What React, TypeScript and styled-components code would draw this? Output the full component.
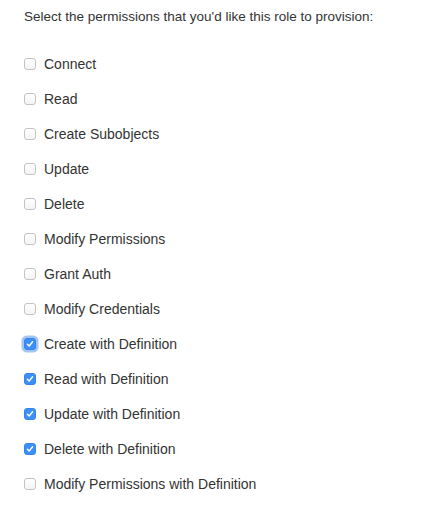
import styled, { createGlobalStyle, css } from "styled-components";

const GlobalStyle = createGlobalStyle`
  body {
    margin: 0;
    background: #ffffff;
    font-family: "Liberation Sans", Arial, sans-serif;
    color: #333333;
  }
`;

const permissions = [
  { name: "Connect", checked: false },
  { name: "Read", checked: false },
  { name: "Create Subobjects", checked: false },
  { name: "Update", checked: false },
  { name: "Delete", checked: false },
  { name: "Modify Permissions", checked: false },
  { name: "Grant Auth", checked: false },
  { name: "Modify Credentials", checked: false },
  { name: "Create with Definition", checked: true, focused: true },
  { name: "Read with Definition", checked: true },
  { name: "Update with Definition", checked: true },
  { name: "Delete with Definition", checked: true },
  { name: "Modify Permissions with Definition", checked: false },
];

const Check = () => (
  <svg width="8" height="8" viewBox="0 0 8 8">
    <path d="M1.4 4.2 L3.2 6 L6.6 1.8" fill="none" stroke="#fff" strokeWidth="1.4" strokeLinecap="round" strokeLinejoin="round" />
  </svg>
);

export default function App() {
  return (
    <>
      <GlobalStyle />
      <Panel>
        <Intro>Select the permissions that you'd like this role to provision:</Intro>
        <List>
          {permissions.map((p) => (
            <Row key={p.name}>
              <Box checked={p.checked} focused={!!p.focused}>
                {p.checked && <Check />}
              </Box>
              <Label>{p.name}</Label>
            </Row>
          ))}
        </List>
      </Panel>
    </>
  );
}

const Panel = styled.div`
  padding: 7px 0 0 24px;
`;

const Intro = styled.p`
  margin: 0;
  font-size: 13.5px;
  line-height: 20px;
`;

const List = styled.div`
  display: flex;
  flex-direction: column;
  margin-top: 19px;
`;

const Row = styled.label`
  display: flex;
  align-items: center;
  gap: 8px;
  height: 35px;
  font-size: 14px;
`;

const Box = styled.span<{ checked: boolean; focused: boolean }>`
  box-sizing: border-box;
  width: 12px;
  height: 12px;
  border-radius: 3px;
  display: flex;
  align-items: center;
  justify-content: center;
  ${(p) =>
    p.checked
      ? css`
          background: #3b8ff6;
          border: 1px solid #3585ea;
        `
      : css`
          background: linear-gradient(#ffffff, #f4f4f4);
          border: 1px solid #c4c4c4;
        `}
  ${(p) =>
    p.focused &&
    css`
      box-shadow: 0 0 0 2.5px rgba(90, 150, 235, 0.55);
    `}
`;

const Label = styled.span`
  color: #333333;
  line-height: 20px;
`;
